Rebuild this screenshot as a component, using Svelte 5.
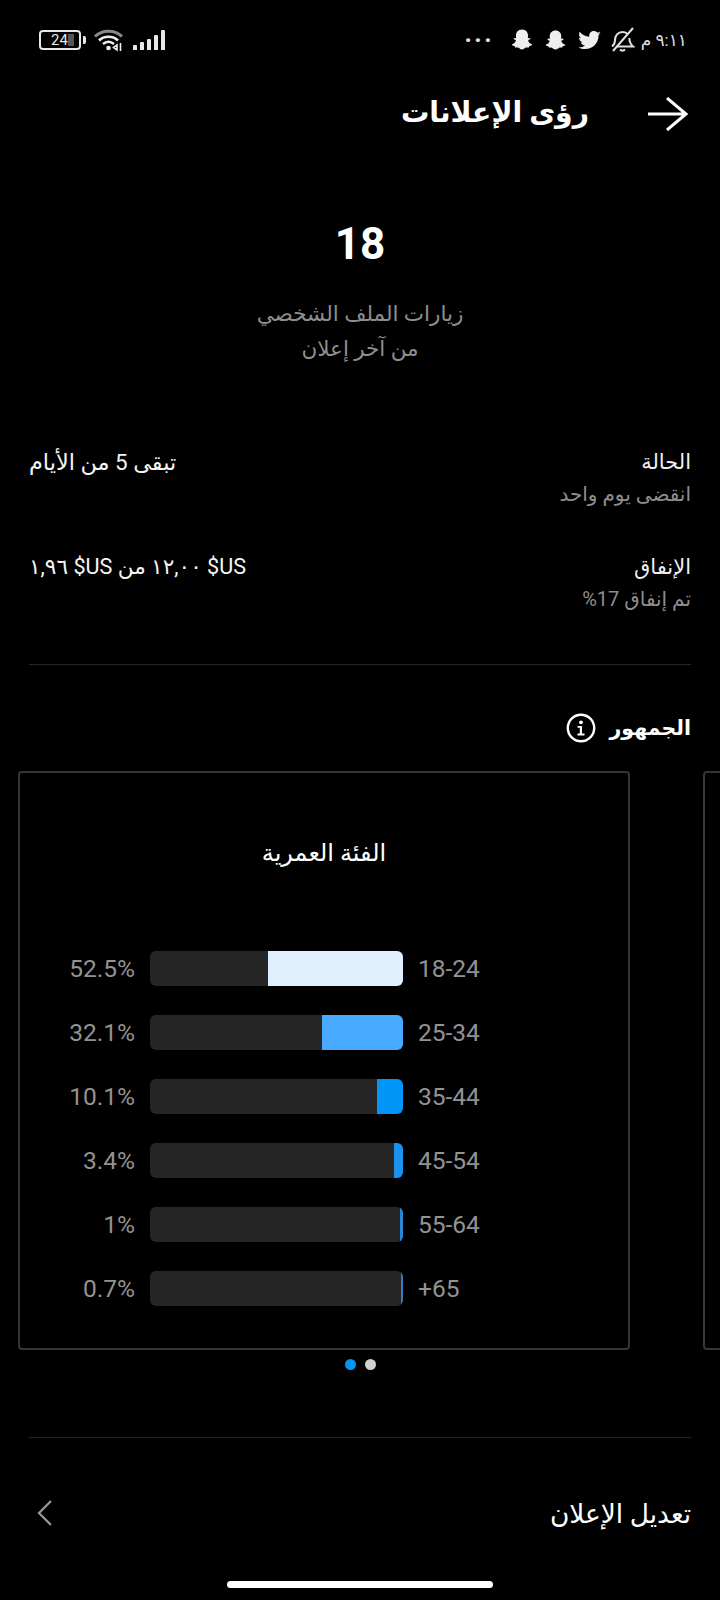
<script>
  const rows = [
    { pct: '52.5%', age: '18-24', fill: 53.3, color: '#e0f0ff' },
    { pct: '32.1%', age: '25-34', fill: 32.1, color: '#47a9ff' },
    { pct: '10.1%', age: '35-44', fill: 10.1, color: '#0095f6' },
    { pct: '3.4%', age: '45-54', fill: 3.4, color: '#1a92ee' },
    { pct: '1%', age: '55-64', fill: 1, color: '#2a87d8' },
    { pct: '0.7%', age: '+65', fill: 0.7, color: '#2f7cc4' }
  ];
  const ghost = 'M12 1.500c3.800 0 6 2.800 6 6 0 1 0 1.800-.1 2.600.7.300 1.700-.6 2.300 0 .6.700-.3 1.500-1.600 2-.5.200-.6.500-.4 1 .7 1.500 1.900 2.700 3.600 3.200.5.200.5.800 0 1-.8.400-1.700.4-2.300.8-.4.300-.2 1.100-.7 1.300-.8.200-1.900-.2-3 .2-1 .4-1.800 1.900-3.800 1.900s-2.800-1.500-3.800-1.900c-1.100-.4-2.200 0-3-.2-.5-.2-.3-1-.7-1.300-.6-.4-1.500-.4-2.300-.8-.5-.2-.5-.8 0-1 1.700-.5 2.900-1.700 3.600-3.200.2-.5.100-.8-.4-1-1.300-.5-2.200-1.300-1.600-2 .6-.6 1.600.3 2.300 0-.1-.8-.1-1.600-.1-2.600 0-3.200 2.200-6 6-6z';
</script>

<div class="page">
  <div class="status">
    <div class="status-side">
      <div class="battery">
        <div class="battery-body"><span>24</span><i></i></div>
        <b></b>
      </div>
      <svg class="wifi" width="32" height="24" viewBox="0 0 32 24" fill="none">
        <path d="M2 8.500C9 1.500 22 1.500 29 8.500" stroke="#8a8a8a" stroke-width="3" />
        <path d="M6 12.500C11 7.500 20 7.500 25 12.500" stroke="#eee" stroke-width="2.600" />
        <path d="M10 16c3.500-3 7.500-3 11 0" stroke="#eee" stroke-width="2.400" />
        <circle cx="15.500" cy="20" r="2.300" fill="#eee" />
        <path d="M24 16v7M20.500 19.500l3.500-2.500v5zM27.500 15v8" stroke="#eee" stroke-width="1.600" />
      </svg>
      <div class="signal">
        {#each [5, 8, 11, 15, 20] as h}
          <span style="height: {h}px"></span>
        {/each}
      </div>
    </div>
    <div class="status-side">
      <span class="more">···</span>
      <svg class="snap" width="24" height="24" viewBox="0 0 24 24"><path d={ghost} fill="#eee" /></svg>
      <svg class="snap two" width="23" height="23" viewBox="0 0 24 24"><path d={ghost} fill="#eee" /></svg>
      <svg class="bird" width="23" height="19" viewBox="0 0 24 20"><path fill="#eee" d="M24 2.400c-.9.400-1.800.700-2.800.8 1-.6 1.800-1.600 2.200-2.700-1 .6-2 1-3.100 1.200C19.300.7 18 0 16.600 0c-2.700 0-4.900 2.200-4.900 4.900 0 .4 0 .8.100 1.100C7.700 5.800 4.100 3.900 1.700.9c-.4.700-.7 1.600-.7 2.500 0 1.700.9 3.200 2.200 4.100-.8 0-1.600-.2-2.200-.6v.1c0 2.400 1.700 4.400 3.900 4.800-.4.100-.8.200-1.300.2-.3 0-.6 0-.9-.1.600 2 2.400 3.400 4.600 3.400-1.700 1.300-3.800 2.100-6.100 2.100-.4 0-.8 0-1.200-.1C2.200 18.200 4.800 19 7.500 19c9.100 0 14-7.500 14-14v-.6c1-.7 1.800-1.600 2.500-2z"/></svg>
      <svg class="bell" width="25" height="26" viewBox="0 0 25 26" fill="none" stroke="#e0e0e0" stroke-width="2">
        <path d="M2 19.500c2-1.500 3-3 3-6.500 0-4.500 3-8 7.500-8 2 0 3.500.6 4.700 1.700M19.300 11c.2 4 1.300 6.500 3.700 8.500H7" />
        <path d="M10 22.500c1.300 1.500 3.700 1.500 5 0" />
        <path d="M3 24L23 1" />
      </svg>
      <span class="clock">٩:١١ م</span>
    </div>
  </div>

  <header class="topbar">
    <svg width="42" height="34" viewBox="0 0 42 34" fill="none" stroke="#fff" stroke-width="3"><path d="M1 17h38M20 1l19 16-19 16" /></svg>
    <h1>رؤى الإعلانات</h1>
  </header>

  <section class="hero">
    <div class="count">18</div>
    <p>زيارات الملف الشخصي<br />من آخر إعلان</p>
  </section>

  <section class="details">
    <div class="row">
      <div>
        <div class="label">الحالة</div>
        <div class="sub">انقضى يوم واحد</div>
      </div>
      <div class="value wide">تبقى 5 من الأيام</div>
    </div>
    <div class="row">
      <div>
        <div class="label">الإنفاق</div>
        <div class="sub">تم إنفاق 17%</div>
      </div>
      <div class="value">&lrm;$US ١٢,٠٠ من &lrm;$US ١,٩٦</div>
    </div>
  </section>

  <div class="divider"></div>

  <h2>
    الجمهور
    <svg width="30" height="30" viewBox="0 0 30 30" fill="none"><circle cx="15" cy="15" r="13.200" stroke="#fff" stroke-width="2.400" /><circle cx="15" cy="9.300" r="1.900" fill="#fff" /><path d="M11.500 13h4.500v7.600h2.500v1.800h-7v-1.800h2.300v-5.800h-2.300z" fill="#fff" /></svg>
  </h2>

  <div class="carousel">
    <div class="card">
      <h3>الفئة العمرية</h3>
      <div class="bars">
        {#each rows as r}
          <div class="bar-row">
            <span class="pct">{r.pct}</span>
            <div class="track"><div class="fill" style="width: {r.fill}%; background: {r.color}"></div></div>
            <span class="age">{r.age}</span>
          </div>
        {/each}
      </div>
    </div>
    <div class="card"></div>
  </div>

  <div class="dots"><span class="on"></span><span></span></div>

  <div class="divider low"></div>

  <div class="edit">
    <span>تعديل الإعلان</span>
    <svg width="18" height="28" viewBox="0 0 18 28" fill="none" stroke="#9a9a9a" stroke-width="2.200"><path d="M15 2L3 14l12 12" /></svg>
  </div>

  <div class="home-bar"></div>
</div>

<style>
  :global(body) {
    margin: 0;
    background: #000;
  }

  .page {
    direction: rtl;
    width: 720px;
    height: 1600px;
    overflow: hidden;
    background: #000;
    color: #fff;
    font-family: Roboto, "DejaVu Sans", sans-serif;
    display: flex;
    flex-direction: column;
  }

  .status {
    direction: ltr;
    display: flex;
    justify-content: space-between;
    align-items: center;
    height: 24px;
    padding: 28px 33px 0 39px;
  }

  .status-side {
    display: flex;
    align-items: center;
  }

  .battery {
    display: flex;
    align-items: center;
    gap: 2px;
  }

  .battery-body {
    position: relative;
    box-sizing: border-box;
    width: 42px;
    height: 20px;
    border: 2px solid #e8e8e8;
    border-radius: 4px;
    font-size: 15px;
    line-height: 16px;
    color: #e8e8e8;
    padding-left: 10px;
  }

  .battery-body span {
    position: relative;
    z-index: 1;
  }

  .battery-body i {
    position: absolute;
    left: 27px;
    top: 2px;
    width: 6px;
    height: 12px;
    background: #555;
  }

  .battery b {
    width: 3px;
    height: 8px;
    background: #e8e8e8;
    border-radius: 0 2px 2px 0;
  }

  .wifi {
    margin-left: 7px;
  }

  .signal {
    display: flex;
    align-items: flex-end;
    gap: 3px;
    height: 20px;
    margin-left: 8px;
  }

  .signal span {
    width: 4px;
    background: #e8e8e8;
    border-radius: 1px 1px 0 0;
  }

  .more {
    font-size: 26px;
    font-weight: 700;
    line-height: 24px;
    letter-spacing: 2px;
    color: #ddd;
    margin-right: 16px;
  }

  .snap.two {
    margin-left: 10px;
  }

  .bird {
    margin-left: 11px;
  }

  .bell {
    margin-left: 9px;
  }

  .clock {
    direction: rtl;
    font-size: 17px;
    color: #ddd;
    margin-left: 6px;
    white-space: nowrap;
  }

  .topbar {
    display: flex;
    align-items: center;
    gap: 58px;
    height: 60px;
    margin-top: 32px;
    padding: 0 31px;
  }

  h1 {
    margin: 0 0 4px;
    font-size: 28.300px;
    font-weight: 700;
  }

  .hero {
    text-align: center;
    margin-top: 76px;
  }

  .count {
    font-size: 44px;
    font-weight: 700;
    line-height: 48px;
  }

  .hero p {
    margin: 28px 0 0;
    font-size: 21.500px;
    line-height: 35px;
    color: #8e8e8e;
  }

  .details {
    margin-top: 80px;
    padding: 0 29px;
    display: flex;
    flex-direction: column;
    gap: 40px;
  }

  .row {
    display: flex;
    justify-content: space-between;
  }

  .label {
    font-size: 21px;
    line-height: 32px;
    color: #f0f0f0;
  }

  .sub {
    font-size: 20px;
    line-height: 33px;
    color: #8e8e8e;
  }

  .value {
    font-size: 21.600px;
    line-height: 32px;
    color: #f5f5f5;
  }

  .value.wide {
    font-size: 22.400px;
  }

  .divider {
    height: 1px;
    flex: none;
    margin: 48px 29px 0;
    background: #262626;
  }

  h2 {
    margin: 46px 29px 0;
    display: flex;
    align-items: center;
    gap: 14px;
    height: 34px;
    font-size: 20.500px;
    font-weight: 700;
  }

  .carousel {
    direction: ltr;
    display: flex;
    gap: 73px;
    margin-top: 26px;
    padding-left: 18px;
    overflow: hidden;
  }

  .card {
    box-sizing: border-box;
    flex: none;
    width: 612px;
    height: 579px;
    border: 2px solid #363636;
    border-radius: 4px;
  }

  h3 {
    direction: rtl;
    margin: 63px 0 0;
    text-align: center;
    font-size: 24px;
    font-weight: 400;
    line-height: 34px;
  }

  .bars {
    margin-top: 81px;
    padding-left: 15px;
    display: flex;
    flex-direction: column;
    gap: 29px;
  }

  .bar-row {
    display: flex;
    align-items: center;
    height: 35px;
  }

  .pct, .age {
    font-size: 24.500px;
    color: #939393;
  }

  .pct {
    width: 100px;
    text-align: right;
  }

  .age {
    margin-left: 15px;
  }

  .track {
    display: flex;
    justify-content: flex-end;
    width: 253px;
    height: 35px;
    margin-left: 15px;
    background: #262626;
    border-radius: 6px;
    overflow: hidden;
  }

  .fill {
    height: 100%;
  }

  .dots {
    direction: ltr;
    display: flex;
    justify-content: center;
    gap: 9px;
    margin-top: 9px;
  }

  .dots span {
    width: 11px;
    height: 11px;
    border-radius: 50%;
    background: #d0d0d0;
  }

  .dots .on {
    background: #0095f6;
  }

  .divider.low {
    margin-top: 67px;
  }

  .edit {
    display: flex;
    justify-content: space-between;
    align-items: center;
    margin-top: 55px;
    padding: 0 29px 0 36px;
    font-size: 26.400px;
    height: 40px;
  }

  .home-bar {
    width: 266px;
    height: 7px;
    margin: 48px auto 0;
    background: #fff;
    border-radius: 4px;
  }
</style>
